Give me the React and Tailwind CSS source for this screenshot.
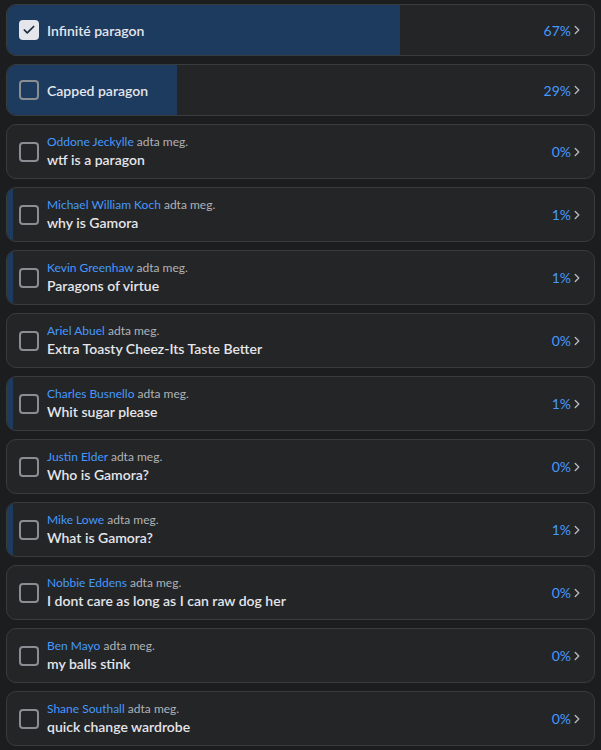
import { Check, ChevronRight } from "lucide-react";

// opzioni del sondaggio
const options = [
  { text: "Infinité paragon", pct: 67, checked: true },
  { text: "Capped paragon", pct: 29 },
  { author: "Oddone Jeckylle", text: "wtf is a paragon", pct: 0 },
  { author: "Michael William Koch", text: "why is Gamora", pct: 1 },
  { author: "Kevin Greenhaw", text: "Paragons of virtue", pct: 1 },
  { author: "Ariel Abuel", text: "Extra Toasty Cheez-Its Taste Better", pct: 0 },
  { author: "Charles Busnello", text: "Whit sugar please", pct: 1 },
  { author: "Justin Elder", text: "Who is Gamora?", pct: 0 },
  { author: "Mike Lowe", text: "What is Gamora?", pct: 1 },
  { author: "Nobbie Eddens", text: "I dont care as long as I can raw dog her", pct: 0 },
  { author: "Ben Mayo", text: "my balls stink", pct: 0 },
  { author: "Shane Southall", text: "quick change wardrobe", pct: 0 },
];

function Option({ opt }) {
  return (
    <div
      className={`relative overflow-hidden rounded-[10px] border border-[#3a3b3c] bg-[#242526] ${
        opt.author ? "h-[55px]" : "h-[52px]"
      }`}
    >
      <div
        className="absolute left-0 top-0 bottom-0 bg-[#1d3a5f]"
        style={{ width: `${opt.pct}%` }}
      />
      <div className="relative flex h-full items-center pl-3 pr-[10px]">
        {opt.checked ? (
          <div className="flex h-5 w-5 items-center justify-center rounded-[4px] bg-[#e4e6eb]">
            <Check size={14} strokeWidth={3} className="text-[#1c2b3d]" />
          </div>
        ) : (
          <div className="h-5 w-5 rounded-[4px] border-2 border-[#8a8d91]" />
        )}
        <div className="ml-[8px] flex-1">
          {opt.author ? (
            <>
              <div className="text-[12px] leading-[16px]">
                <span className="text-[#4599ff]">{opt.author}</span>
                <span className="text-[#b0b3b8]"> adta meg.</span>
              </div>
              <div className="text-[14px] font-semibold leading-[19px] text-[#e4e6eb]">{opt.text}</div>
            </>
          ) : (
            <div className="text-[14px] font-semibold text-[#e4e6eb]">{opt.text}</div>
          )}
        </div>
        <span className="text-[14px] text-[#4599ff]">{opt.pct}%</span>
        <ChevronRight size={14} strokeWidth={2.5} className="-ml-[1px] text-[#b0b3b8]" />
      </div>
    </div>
  );
}

export default function App() {
  return (
    <div
      className="min-h-screen bg-[#1c1d1f] px-[6px] pt-[4px] pb-[5px]"
      style={{ fontFamily: 'Lato, "Noto Sans", sans-serif' }}
    >
      <div className="flex flex-col gap-2">
        {options.map((opt, i) => (
          <Option key={i} opt={opt} />
        ))}
      </div>
    </div>
  );
}
